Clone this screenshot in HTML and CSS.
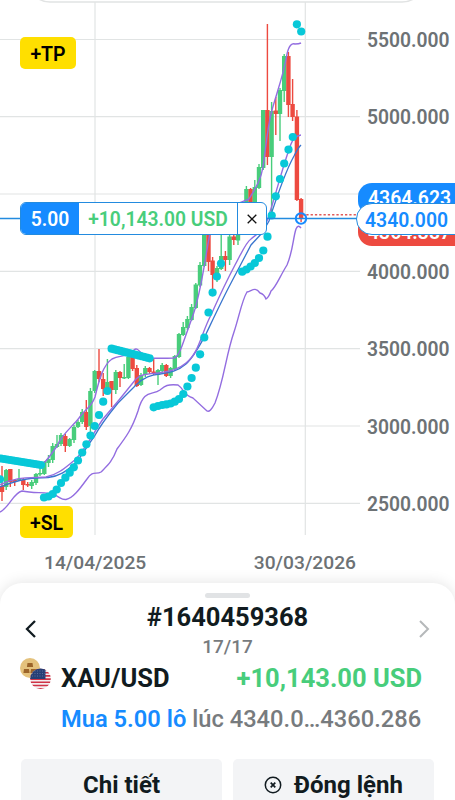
FILE: index.html
```
<!DOCTYPE html>
<html lang="vi">
<head>
<meta charset="utf-8">
<meta name="viewport" content="width=device-width, initial-scale=1">
<title>XAU/USD</title>
<link rel="stylesheet" href="styles.css">
</head>
<body>
<main class="app">
  <section class="chart">
    <svg class="plot" width="455" height="583" viewBox="0 0 455 583">
      <path class="grid" d="M0 39.5H360M0 116.7H360M0 194H360M0 271.3H360M0 348.7H360M0 426H360M0 503.3H360M95 2V535M305.3 2V535"/>
      <path class="top-card" d="M30 -18Q33 2 50 2H402Q419 2 424 -18"/>
      <g id="candles"></g>
      <path class="avg" d="M0 487C20 479 32 477.500 48 477.500C60 476 66 471 72 466C80 460 86 447 94 437C101 424 109 414 118 403L136 385C144 377 151 375 160 374C170 372.500 178 371 186 364C194 357 200 345 206 334C216 313 223 298 231 283L251 245L262 233L269 221C277 196 285 172 294 156Q298 148 301 145"/>
      <path class="band" d="M43 464C49 458 51 455 57 446C62 434 72 427 79 418C85 409 91 408 95 397C99 380 103 365 112 359C120 355 129 357 134 350C138 346 140 355 150 358Q160 358.500 174 358Q178 357 182 346L192 318C201 295 205 258 210 233C225 205 240 203 249 199C255 189 261 180 263 167C266 147 267 129 272 110C278 89 284 73 287 54C289 45 292 43 295 44Q299 44 301 43"/>
      <path class="band" d="M0 485C15 477 25 478 46 477C60 474 68 465 76 459C86 448 94 432 103 419L119 400L136 379C141 374 148 374 158 373C170 371 178 370 186 363C199 353 201 334 211 315C219 297 227 280 235 265C240 256 246 242 251 239C256 234 262 233 267 221C276 195 282 168 291 144Q294 136 301 135"/>
      <path class="band" d="M0 512C10 507 13 493 22 491C35 494 47 491 55 495C61 498 62 500 66 499.500C73 498 79 490 87 479C93 470 96 475 101 472C108 465 112 462 117 449C126 437 132 429 138 411C144 388 152 396 160 390C165 386 167 384 178 385C185 390 183 395 193 398L207 411Q210 413 215 403C224 380 226 355 234 332C239 317 242 300 247 292C252 291 255 286 260 293Q264 294 266 299Q269 297 271 291C276 287 279 278 287 265C293 251 293 238 296 229Q298 224 301 228"/>
      <g id="dots"></g>
      <path class="sell-line" d="M302 214.700H358"/>
      <path class="open-line" d="M0 218.500H358"/>
      <circle class="open-point" cx="301" cy="218.500" r="5.200"/>
    </svg>

    <div class="prices">
      <span>5500.000</span><span>5000.000</span><span class="covered">4500.000</span><span>4000.000</span><span>3500.000</span><span>3000.000</span><span>2500.000</span>
    </div>
    <div class="dates"><span>14/04/2025</span><span>30/03/2026</span></div>

    <button class="tag tag-tp">+TP</button>
    <button class="tag tag-sl">+SL</button>

    <div class="quote quote-sell">4364.387</div>
    <div class="quote quote-buy">4364.623</div>
    <div class="quote quote-open">4340.000</div>

    <div class="ticket">
      <span class="lots">5.00</span><span class="profit">+10,143.00 USD</span>
      <span class="close"><svg width="10" height="10" viewBox="0 0 10 10"><path d="M.7 .7L9.300 9.300M9.300 .7L.7 9.300" stroke="#111" stroke-width="1.300"/></svg></span>
    </div>
  </section>

  <section class="sheet">
    <div class="handle"></div>
    <header class="pager">
      <svg width="12" height="20" viewBox="0 0 12 20"><path d="M10 2L2 10L10 18" fill="none" stroke="#111b20" stroke-width="2.300"/></svg>
      <div class="heading"><h1>#1640459368</h1><p>17/17</p></div>
      <svg width="12" height="20" viewBox="0 0 12 20"><path d="M2 2L10 10L2 18" fill="none" stroke="#b5b8ba" stroke-width="2"/></svg>
    </header>
    <div class="position">
      <svg class="pair" width="31" height="32" viewBox="0 0 31 32">
        <defs><clipPath id="flag"><circle cx="20.500" cy="20.700" r="10.300"/></clipPath></defs>
        <circle cx="10" cy="10" r="10" fill="#e4c27d"/>
        <path d="M7.500 5h5l.6 4h-6.200zM4 11h5l.6 4H3.400zM11 11h5l.6 4h-6.200z" fill="#9b6429"/>
        <g clip-path="url(#flag)">
          <path d="M10 10h22v22H10z" fill="#f4eef0"/>
          <path d="M10 11.500h22M10 14.700h22M10 17.900h22M10 21.100h22M10 24.300h22M10 27.500h22M10 30.700h22" stroke="#cf3346" stroke-width="1.600"/>
          <path d="M10 10h15.500v11H10z" fill="#263f75"/>
          <path d="M12 13h13M12 15.500h13M12 18h13" stroke="#7283aa" stroke-width=".7" stroke-dasharray="1 1.500"/>
        </g>
      </svg>
      <strong class="symbol">XAU/USD</strong>
      <strong class="result">+10,143.00 USD</strong>
    </div>
    <div class="deal"><span><b>Mua 5.00 lô</b> lúc 4340.0…4360.286</span></div>
    <div class="actions">
      <button>Chi tiết</button>
      <button><svg width="18" height="18" viewBox="0 0 18 18"><circle cx="9" cy="9" r="7.700" fill="none" stroke="#111b20" stroke-width="1.500"/><path d="M6.700 6.700L11.300 11.300M11.300 6.700L6.700 11.300" stroke="#111b20" stroke-width="1.700"/></svg>Đóng lệnh</button>
    </div>
  </section>
</main>
<script src="chart.js"></script>
</body>
</html>
```
FILE: styles.css
```
* { box-sizing: border-box; }
body { margin: 0; background: #fff; font-family: Roboto, "Liberation Sans", sans-serif; color: #111b20; }
button { border: 0; padding: 0; font: inherit; color: inherit; }
.app { width: 455px; height: 800px; overflow: hidden; display: flex; flex-direction: column; }
.chart { position: relative; height: 583px; flex: none; background: #fff; }
.plot { display: block; }
.grid { stroke: #e1e4e4; stroke-width: 1.2; fill: none; }
.top-card { stroke: #e1e3e3; stroke-width: 1.5; fill: #fff; }
.up { fill: #48cd7b; stroke: none; }
.down { fill: #ed4a40; stroke: none; }
.avg { fill: none; stroke: #3975ce; stroke-width: 1.3; }
.band { fill: none; stroke: #936de0; stroke-width: 1.4; }
.sar { fill: #08c8d8; }
.sell-line { stroke: #e15a59; stroke-width: 1.4; stroke-dasharray: 2.3 2; }
.open-line { stroke: #238bdf; stroke-width: 1.3; }
.open-point { fill: none; stroke: #168bff; stroke-width: 2; }

.prices { position: absolute; left: 367px; top: 2px; display: grid; grid-auto-rows: 77.300px; align-items: center; font-size: 19.300px; font-weight: 600; color: #6d7275; }
.covered { visibility: hidden; }
.dates { position: absolute; left: 44px; top: 551px; width: 312px; display: flex; justify-content: space-between; font-size: 19.200px; line-height: 24px; font-weight: 500; color: #6d7275; }
.tag { position: absolute; left: 20px; height: 32px; border-radius: 5px; background: #ffdf00; color: #000; font-size: 19.500px; font-weight: 600; line-height: 35px; text-align: center; }
.tag-tp { top: 37px; width: 56px; }
.tag-sl { top: 506px; width: 53px; }
.quote { position: absolute; left: 358px; width: 120px; height: 32px; border-radius: 14px; font-size: 19.400px; font-weight: 600; line-height: 32px; padding-left: 10px; color: #fff; }
.quote-buy { top: 183px; background: #168bff; }
.quote-sell { top: 214px; background: #ed4a40; line-height: 38px; }
.quote-open { left: 356px; top: 203px; height: 32px; border: 1.500px solid #238bdf; border-radius: 16px; background: #fff; color: #168bff; line-height: 33px; padding-left: 8px; }
.ticket { position: absolute; left: 20px; top: 202px; width: 247px; height: 33px; display: flex; border: 1.500px solid #238bdf; border-radius: 6px; overflow: hidden; background: #fff; font-size: 19.300px; font-weight: 600; line-height: 34px; text-align: center; }
.lots { width: 58px; background: #168bff; color: #fff; }
.profit { width: 158px; color: #48cd7b; }
.close { flex: 1; border-left: 1.500px solid #238bdf; display: flex; align-items: center; justify-content: center; }

.sheet { position: relative; height: 217px; background: #fff; border-radius: 22px 22px 0 0; box-shadow: 0 -1px 14px rgba(0, 0, 0, .1); padding: 10px 20px 0; }
.handle { width: 45px; height: 5px; margin: 0 auto; border-radius: 3px; background: #e1e3e5; }
.pager { display: flex; justify-content: space-between; align-items: center; height: 60px; padding: 0 5px; }
.pager > svg { margin-top: 1px; }
.heading { text-align: center; }
h1 { margin: 5px 0 0; font-size: 25.500px; line-height: 30px; font-weight: 700; }
.heading p { margin: 2px 0 0; font-size: 19px; line-height: 26px; font-weight: 500; color: #777b7e; }
.position { display: flex; align-items: center; height: 36px; margin-top: 2px; }
.pair { margin-top: -8px; }
.symbol { margin-left: 10px; font-size: 25.500px; font-weight: 700; }
.result { margin-left: auto; margin-right: 13px; font-size: 25.500px; font-weight: 700; color: #48cd7b; }
.deal { display: flex; height: 46px; align-items: center; padding-left: 41px; font-size: 23.700px; font-weight: 500; color: #777b7e; white-space: nowrap; }
.deal b { color: #168bff; font-weight: 600; }
.actions { display: grid; grid-template-columns: 201px 201px; gap: 11px; margin: 17px 0 0 1px; }
.actions button { display: flex; align-items: center; justify-content: center; gap: 12px; height: 52px; border-radius: 5px; background: #f3f4f6; font-size: 24px; font-weight: 700; }
```
FILE: chart.js
```
const NS = "http://www.w3.org/2000/svg";

// x, high, body top, body bottom, low, direction
const candles = [
  [2, 466, 486, 492, 501, 0], [6.2, 469, 470, 487, 490, 1], [10.3, 469, 469, 482, 487, 0],
  [14.7, 479, 480, 482, 486, 0], [19, 469, 479, 480.5, 481, 1], [23.3, 478, 480, 485, 490, 0],
  [27.7, 482, 484, 485.5, 487, 0], [31.7, 480, 482, 486, 489, 1], [36, 473, 474, 483, 485, 1],
  [40, 468, 473, 474.5, 476, 1], [44.3, 461, 462, 474, 475, 1], [48.5, 455, 459, 463, 467, 1],
  [52.7, 443, 446, 460, 463, 1], [57, 435, 444, 447, 448, 1], [61, 433, 435, 444, 446, 1],
  [65.3, 434, 436, 446, 452, 0], [69.6, 438, 439, 446, 447, 1], [74, 425, 427, 440, 443, 1],
  [78, 420, 422, 427, 428, 1], [82.2, 409, 412, 422, 424, 1], [86.3, 400, 412, 427, 430, 0],
  [90.4, 388, 391, 426, 432, 1], [94.7, 370, 371, 391, 393, 1], [99, 349, 371, 379, 382, 0],
  [103.2, 373, 379, 389, 396, 0], [107.4, 359, 382, 390, 391, 1], [111.6, 381, 381, 390, 407, 0],
  [115.8, 370, 372, 390, 394, 1], [120, 371, 372, 378, 387, 0], [124.2, 364, 377, 378.5, 379, 1],
  [128.4, 350, 357, 378, 379, 1], [132.6, 352, 354, 369, 371, 0], [136.8, 365, 368, 386, 387, 0],
  [141, 373, 375, 385, 386, 1], [145.3, 366, 368, 375, 377, 1], [149.5, 367, 368, 372, 374, 0],
  [153.7, 359, 371.5, 374, 375, 0], [158, 369, 370, 375, 385, 1], [162.2, 363, 365, 371, 372, 1],
  [166.3, 364, 365, 376, 377, 0], [170.6, 367, 368, 376, 378, 1], [174.8, 355, 356, 369, 371, 1],
  [179, 333, 334, 357, 358, 1], [183.2, 322, 327, 335, 336, 1], [187.4, 316, 319, 328, 330, 1],
  [191.6, 304, 307, 320, 321, 1], [195.8, 283, 284.5, 308, 309, 1], [200, 262, 265, 285.5, 287, 1],
  [204.2, 215, 225, 266, 267, 1], [208.5, 215, 225, 262, 271, 0], [212.6, 257, 260.5, 275, 290, 0],
  [217, 266, 268, 275, 282, 1], [221.2, 215, 256, 269, 270, 1], [225.4, 251, 256, 260, 271, 0],
  [229.6, 230, 236.5, 260, 265, 1], [233.8, 230, 236.5, 240, 245, 0], [238, 230, 235, 240.5, 245, 1],
  [242.2, 205, 208, 230, 232, 1], [246.4, 186, 189, 215, 220, 1], [250.6, 188, 189, 215, 220, 0],
  [254.8, 180, 187, 215, 217, 1], [259, 164, 167, 188, 189, 1], [263.2, 110, 110, 168, 170, 1],
  [267.4, 24, 110, 157, 165, 0], [271.6, 102, 111, 157, 216, 1], [275.8, 97, 110.5, 114, 135, 0],
  [280, 88, 90, 114, 141, 1], [284.2, 54, 56, 91, 102, 1], [288.4, 52, 56, 105, 117, 0],
  [292.6, 79, 104, 117, 121, 0], [296.9, 110, 116.5, 200, 201, 0], [301.1, 198, 199, 219, 222, 0]
];

const dots = [
  [0, 479.3],
  [44, 497.5], [48.5, 496.5], [52.7, 494], [56.7, 489.5], [61, 483], [65.4, 477.7], [69.7, 472.7], [73.8, 467.3],
  [78, 460.5], [82.2, 452.5], [86.4, 444.3], [90.5, 435.5], [94.7, 426], [99, 415], [103.2, 401.7], [107.4, 391],
  [153.7, 407.3], [158, 406], [162.2, 405], [166.4, 404.4], [170.6, 403.5], [174.8, 401.7], [179, 399], [183.3, 394],
  [187.4, 386.5], [191.6, 378], [195.8, 367.7], [200.1, 354.3], [204.3, 337.5], [208.5, 312.5], [212.6, 292.6],
  [216.9, 276.5], [221, 263.6],
  [242.2, 271.7], [246.4, 269.5], [250.6, 266.5], [254.8, 263], [259, 258], [263.3, 250.5], [267.5, 236.7],
  [271.7, 215.5], [275.8, 196.3], [280, 179], [284.2, 163.5], [288.5, 149.6], [292.8, 137],
  [296.9, 24.3], [301.2, 31.5]
];

// Evenly spaced runs of indicator dots along a straight slope.
function run(x1, y1, x2, y2, count) {
  for (let i = 0; i < count; i++) {
    const t = i / (count - 1);
    dots.push([x1 + (x2 - x1) * t, y1 + (y2 - y1) * t]);
  }
}
run(1, 458.5, 41, 465, 14);
run(111.6, 348.7, 149.6, 358.3, 14);

function add(parent, tag, attrs) {
  const el = document.createElementNS(NS, tag);
  for (const key in attrs) el.setAttribute(key, attrs[key]);
  parent.appendChild(el);
}

const candleLayer = document.getElementById("candles");
for (const [x, high, top, bottom, low, up] of candles) {
  const cls = up ? "up" : "down";
  add(candleLayer, "rect", { class: cls, x: x - 0.7, y: high, width: 1.4, height: low - high });
  add(candleLayer, "rect", { class: cls, x: x - 2.2, y: top, width: 4.4, height: bottom - top });
}

const dotLayer = document.getElementById("dots");
for (const [x, y] of dots) add(dotLayer, "circle", { class: "sar", cx: x, cy: y, r: 4.1 });
```
